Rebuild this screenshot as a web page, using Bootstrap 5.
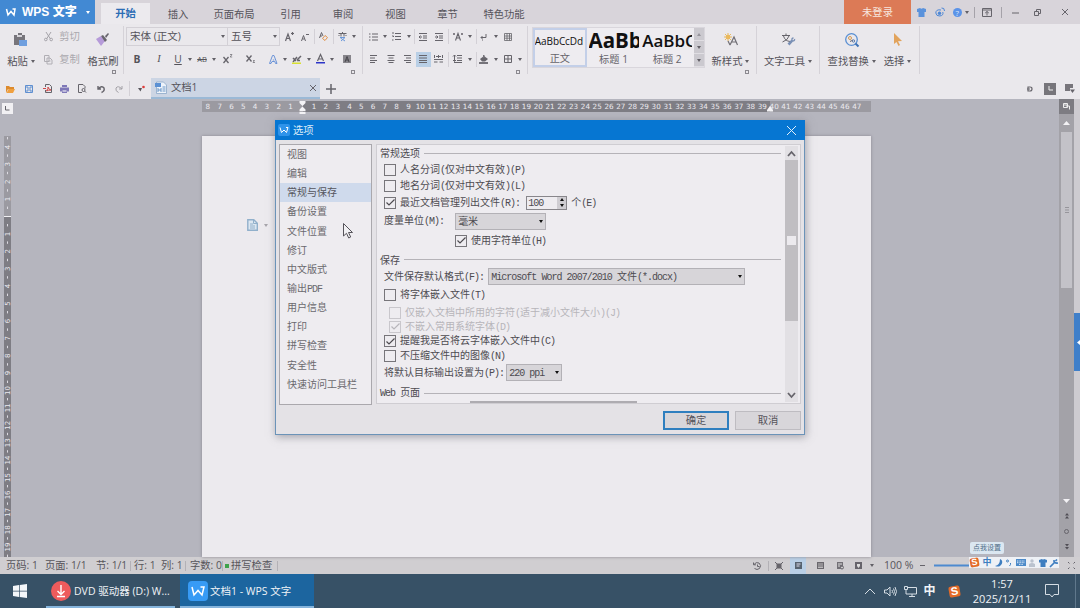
<!DOCTYPE html>
<html lang="zh-CN">
<head>
<meta charset="utf-8">
<title>WPS 文字</title>
<link rel="stylesheet" href="https://cdn.jsdelivr.net/npm/bootstrap@5.3.0/dist/css/bootstrap.min.css">
<style>
html,body{height:100%}
body{width:1080px;height:608px;overflow:hidden;font:10.3px/1.2 "Open Sans","Noto Sans CJK SC",sans-serif;color:#55535a;background:#b5b5be;white-space:nowrap}
svg{display:block;flex:none;overflow:visible}
svg.s{fill:none;stroke:#66646b;stroke-width:1}
.btn{--bs-btn-padding-x:0;--bs-btn-padding-y:0;--bs-btn-font-size:10.3px;--bs-btn-line-height:1.2;--bs-btn-border-radius:0;--bs-btn-color:#55535a;border:0}
.g{display:grid;align-items:center;justify-items:center}
.dn{width:0;height:0;border:2.5px solid transparent;border-top:3px solid #626067;border-bottom:0;display:inline-block;flex:none}
.vl{width:1px;background:#d3d0d6;align-self:center;height:15px}
/* title bar */
.titlebar{height:24px;background:#d8d4da;padding:0}
.titlebar>*{flex:none}
.brand{width:95px;height:24px;background:#4289d3;color:#fff;font:bold 12px/1 "Liberation Sans","Noto Sans CJK SC",sans-serif;padding-left:6px}
.brand .dn{border-top-color:#fff;margin-left:9px}
.brand b{width:55px;margin-left:6px;flex:none}
.tabs{grid-template-columns:49px 56px 56px 57px 48px 57px 47px 66px;margin-left:6px;height:24px}
.tabs a{color:#5c5a61;text-decoration:none;font-size:10.3px;padding-top:4px}
.tabs .on{background:#eceaee;align-self:end;height:21px;width:49px;text-align:center;color:#2c6db5;font-weight:bold;padding-top:4px}
.login{width:67px;height:24px;background:#dc7a56;color:#f7e6df;margin-left:307px}
.wincmd{grid-template-columns:20px 18px 16px 3px 12px 14px 14px 14px 31px 23px}
/* ribbon */
.ribbon{height:54px;background:#eae8ec}
.grp{border-right:1px solid #d5d2d8;height:48px;margin-top:2px}
.big{display:flex;flex-direction:column;align-items:center;height:48px}
.big>svg{margin-top:7px}
.big .lb{position:relative;font-size:10.3px;height:13px;margin-top:auto;margin-bottom:6px;display:flex;align-items:center;gap:3px}
.off{color:#aaa8ae}
.clip{width:124px;grid-template-columns:42px 40px 42px;position:relative}
.mini{display:grid;grid-template-rows:20px 26px;align-items:center;height:48px}
.mini div{display:flex;gap:6px;align-items:center}
.launch{position:absolute;right:7px;bottom:0;width:4px;height:4px;border:1px solid #8b898f}
.font{width:239px;position:relative;padding-left:2px}
.font .r1{grid-template-columns:102px 52px 18px 14px 4px 14px 6px 12px 12px;height:21px}
.font .r2{grid-template-columns:22px 22px 16px 8px 16px 8px 20px 26px 4px 10px 14px 10px 13px 10px 14px 16px;height:24px}
.r1,.r2{justify-content:start}
.combo{width:100%;height:19px;border:1px solid #d3d0d6;display:flex;align-items:center;justify-content:space-between;padding:0 2px 0 3px;font-size:10.5px}
.para{width:165px;position:relative;padding-left:1px}
.para .r1{grid-template-columns:18px 6px 17px 7px 4px 14px 17px 2px 17px 7px 6px 10px 13px 12px 11px;height:21px}
.para .r2{grid-template-columns:20px 14px 18px 14px 17px 2px 17px 7px 6px 10px 13px 12px 11px;height:24px}
.act{background:#b9cfe6;width:15px;height:15px;display:flex;align-items:center;justify-content:center}
.gallery{width:173px;height:41px;margin:3px 0 0 4px;border:1px solid #d9d6dc;background:#eeecf0}
.sty{width:54px;overflow:hidden;text-align:center;color:#111;display:flex;flex-direction:column;align-items:center}
.sty span{height:25px;line-height:25px;font-size:10px;width:50px;overflow:hidden;text-align:left}
.sty small{font-size:10.2px;line-height:12px;color:#66646b}
.sty.on{border:2px solid #c3cfe8;height:39px}
.sty.on span{height:22px;line-height:22px;letter-spacing:-.1px}
.sty .h1s{font:bold 20.5px/25px "Open Sans",sans-serif}
.sty .h2s{font:600 17px/25px "Open Sans",sans-serif}
.gsc{width:10px;background:#cbc9cf;margin-left:auto}
.gsc i{height:13px;border-bottom:1px solid #e0dee3;display:flex;align-items:center;justify-content:center}
/* document tabs */
.quick{height:21px;background:#eae8ec}
.qi{grid-template-columns:20px 18px 18px 17px 18px 19px 17px 4px 20px}
.dtab{width:169px;height:21px;background:#ccd5e4;border-bottom:2px solid #9bb9d6;padding:0 4px 0 4px}
.qr{grid-template-columns:20px 20px 20px}
/* work area */
.work{height:458px;position:relative}
.vside{width:202px}
.corner{width:11px;height:11px;background:#f1f0f3;margin:4px 0 0 2px}
.vruler{width:7px;height:421px;margin:22px 0 0 4px;background:linear-gradient(#9b9aa1 80px,#f1f0f3 80px,#f1f0f3 81px,#7e7d84 81px)}
.vruler text{font:7px "DejaVu Sans",sans-serif;fill:#eceaf0;text-anchor:middle}
.hr1{height:11px;width:669px;margin-top:2px;background:linear-gradient(90deg,#9b9aa1 101px,#7e7d84 101px,#7e7d84 568px,#9b9aa1 568px)}
.hr1 i{font:7.2px/11px "DejaVu Sans",sans-serif;color:#eceaf0;width:11.81px;flex:none;text-align:center}
.hold{position:absolute;top:2px}
.page{margin-top:24px;height:421px;width:669px;background:#eceaee;box-shadow:0 0 3px #88868f;padding:83px 0 0 45px}
.vscroll{width:15px;background:#a3a2a8;margin-left:188px}
.vscroll .top1{height:15px;width:15px;background:#7d7c82}
.thumb{width:11px;height:156px;background:#c3c2c8;margin-top:7px}
.rail{width:6px;background:#cdcbd0}
.rail div{height:58px;margin-top:214px;background:#3f7fc9}
/* status */
.status{height:17px;background:#d0ced1;color:#57555b}
.st{grid-template-columns:39px 51px 34px 4px 27px 24px 5px 32px 4px 4px 43px 6px;justify-items:start;padding-left:6px;font-size:10.3px}
.bar1{height:10px;background:#b3b1b6}
.vw{grid-template-columns:18px 5px 15px 24px 20px 21px 15px 11px;margin-left:auto}
.zoomtxt{font-size:10.5px;width:36px;margin-left:7px}
.zline{margin-right:99px}
/* taskbar */
.task{height:34px;background:#375166;color:#f0f3f6}
.app{height:34px;border-bottom:2px solid #85b4dc;font-size:10.5px}
.tray{grid-template-columns:20px 20px 20px 19px 30px 66px 33px 15px}
.clock{font-size:11px;line-height:15.5px;text-align:center;padding-top:0}
/* options dialog */
.dlg{position:absolute;left:275px;top:120px;width:530px;height:315px;background:#e4e2e6;border:1px solid #6b93b8;box-shadow:1px 2px 8px #66667088;font:10px/12px "Noto Sans CJK SC",sans-serif;color:#4d4b50}
.dlg .l{font:10px/12px "Liberation Mono",monospace;letter-spacing:-.97px}
.dhead{height:20px;margin:-1px -1px 0;background:#0676d2;color:#dcecf9;padding:0 10px 0 3px;font-size:10.3px}
.dhead svg:first-child{margin-right:3px}
.dhead .x{margin-right:-1px}
.side{width:93px;height:261px;border:1px solid #aaa8ad;background:#eeecf0;margin:4px 0 0 3px;border-radius:0;color:#6b696e}
.side .list-group-item{height:19.15px;border:0;background:none;color:inherit;padding:3px 7px;border-radius:0}
.side .list-group-item.on{background:#cfdaec;color:#55555c}
.pane{width:425px;height:260px;border:1px solid #cfcdd2;background:#eeecf0;margin:4px 0 0 4px;overflow:hidden}
.opts{width:408px}
.o{display:flex;align-items:center;flex:none;padding-left:7px}
.h13{height:13px}.h14{height:14px}.h15{height:15px}.h16{height:16px}.h17{height:17px}.h19{height:19px}.h20{height:20px}.h24{height:24px}.h22{height:22px}
.o.hd{padding-left:3px}
.hd hr{flex:1;margin:0 4px 0 4px;border-top:1px solid #b5b3b8;opacity:1}
.cb{width:12px;height:12px;border:1px solid #77757a;margin-right:4px;display:flex;align-items:center;justify-content:center;flex:none}
.dis{color:#b7b5ba;padding-left:12px}
.dis .cb{border-color:#c9c7cc;margin-right:4px}
.sel{height:17px;border:1px solid #b3b1b6;background:#d7d5d9;display:flex;align-items:center;justify-content:space-between;padding:0 2px}
.sel .dn,.spin .dn{border-top-color:#111}
.w91{width:91px;margin-left:11px}.w256{width:257px;margin-left:4px}.w56{width:56px;margin-left:2px}
.spin{width:41px;height:14px;border:1px solid #88868b;margin:0 4px 0 6px;padding-left:1px;display:flex;align-items:center;justify-content:space-between}
.spin div{width:9px;height:12px;background:#cfcdd2;display:flex;flex-direction:column;align-items:center;justify-content:space-around}
.up{transform:rotate(180deg)}
.indent{padding-left:78px}
.peek{width:167px;height:2px;background:#aeacb1;margin:-4px 0 0 93px;flex:none}
.sb{width:13px;background:#e2e0e4;height:256px;margin-top:1px}
.sb .th{width:13px;height:161px;background:#c0bec2;margin-top:4px;padding:76px 0 0 2px}
.sb .th div{width:9px;height:9px;background:#eceaee}
.dbtn{width:66px;height:19px;border:1px solid #bebcc1!important;background:#d8d6da}
.dbtn.ok{border:2px solid #2f7fbf!important}
.cursor{position:absolute;left:343px;top:223px}
/* input method bar */
.tip1{position:absolute;left:970px;top:542px;width:34px;height:12px;background:#dbe7f1;border-radius:2px;font-size:7px;line-height:12px;text-align:center;color:#4f6d86}
.ime{position:absolute;left:969px;top:557px;width:90px;height:11px;background:#eef1f6;padding:0 1px}
.sg{background:#e46b28;color:#fff;font:bold 9px/9px "Liberation Sans",sans-serif;width:9px;height:9px;text-align:center;border-radius:2px;transform:rotate(-10deg)}
</style>
<script src="https://cdn.jsdelivr.net/npm/bootstrap@5.3.0/dist/js/bootstrap.bundle.min.js"></script>
</head>
<body>
<header class="titlebar d-flex align-items-center">
  <div class="brand d-flex align-items-center">
    <svg width="10" height="8" class="s" style="stroke:#fff;stroke-width:1.5"><path d="M.5 1l1.500 6 3-3.500L8 7l1-6H6.500"/></svg>
    <b>WPS 文字</b><span class="dn"></span>
  </div>
  <nav class="tabs g"><a class="on">开始</a><a>插入</a><a>页面布局</a><a>引用</a><a>审阅</a><a>视图</a><a>章节</a><a>特色功能</a></nav>
  <div class="login d-flex align-items-center justify-content-center">未登录</div>
  <div class="wincmd g">
    <svg width="9" height="9" fill="#5a92dc"><path d="M0 1l3-1q1.500 1.500 3 0l3 1v3H7.500v5h-6V4H0z"/></svg>
    <svg width="10" height="10" class="s" style="stroke:#4b86d6"><path d="M6 3Q1 2 .8 6q.5 3.300 4 3 4-.5 3-4M6.500 1q3-.5 3 3"/><circle cx="4.500" cy="6.300" r="1.300" fill="#4b86d6"/></svg>
    <svg width="9" height="9"><circle cx="4.500" cy="4.500" r="4.500" fill="#5b93e8"/><text x="2.500" y="7.500" font-size="8" fill="#dfe9fa">?</text></svg>
    <span class="dn"></span><span class="vl" style="background:#a5a2a9;height:11px"></span>
    <svg width="10" height="9" class="s"><path d="M.5.5h9v8h-9zM.5 2h9M5 7.500v-4M3.200 5L5 3.500 6.800 5"/></svg>
    <span class="vl" style="background:#a5a2a9;height:11px"></span>
    <svg width="7" height="3" class="s"><path d="M0 2h7"/></svg>
    <svg width="7" height="7" class="s"><path d="M.5 2.500h4v4h-4zM2.500 2V.5h4v4H5"/></svg>
    <svg width="6" height="6" class="s"><path d="M0 0l6 6M6 0L0 6"/></svg>
  </div>
</header>

<section class="ribbon d-flex">
  <div class="grp g clip align-items-start">
    <div class="big"><svg width="14" height="14"><path d="M0 2h4V0h4v2h3v10H0z" fill="#77757b"/><path d="M3 2h5v2H3z" fill="#d6d4d9"/><path d="M5 7h8v6H5z" fill="#6f9fdf"/></svg><span class="lb">粘贴<i class="dn"></i></span></div>
    <div class="mini off"><div><svg width="9" height="9" class="s" style="stroke:#a5a3a9"><path d="M2 0l4.500 7M7 0L2.500 7"/><circle cx="1.800" cy="7.500" r="1.300"/><circle cx="7.200" cy="7.500" r="1.300"/></svg><span>剪切</span></div><div><svg width="9" height="9" class="s" style="stroke:#b0aeb4"><path d="M.5.5H5v6H.5zM3 3h3l2 2v4H3zM4.500 6h2"/></svg><span>复制</span></div></div>
    <div class="big"><svg width="13" height="13"><path d="M0 6l5-3 4 5-4 5z" fill="#b69bd9"/><path d="M5 3l2-1 4 5-2 2zM9 3l3-3 1 1-3 4z" fill="#68656d"/></svg><span class="lb">格式刷</span></div>
    <i class="launch"></i>
  </div>

  <div class="grp font">
    <div class="g r1">
      <div class="combo">宋体 (正文)<i class="dn"></i></div><div class="combo border-start-0">五号<i class="dn"></i></div>
      <svg width="9" height="9" class="s"><path d="M.5 9L3 2l2.500 7M1.500 6.500h3M6 1.500h3M7.500 0v3" stroke-width="1.200"/></svg>
      <svg width="8" height="8" class="s"><path d="M.5 8l2-5.500L4.500 8M1.500 6h2M5 1.500h3"/></svg>
      <i class="vl"></i>
      <svg width="9" height="9" class="s"><path d="M.5 6L2.500.5 4 4M1 4h2"/><path d="M3.500 6.500l2.500-3 2.500 2-2.500 3z" style="stroke:#e0924a"/></svg>
      <i class="vl"></i>
      <svg width="9" height="9" class="s"><path d="M.5 1.500h8M4.500 0v1.500M3 2v2.500M6 2v2.500M1 3v1M8 3v1"/><path d="M2 5.500h5L3 9M2.500 6L7 9" style="stroke:#6c99da"/></svg><i class="dn"></i>
    </div>
    <div class="g r2">
      <b>B</b><i style="font-family:'Liberation Serif'">I</i><u>U</u><i class="dn"></i><s style="font-size:7.500px">AB</s><i class="dn"></i>
      <svg width="10" height="10" class="s"><path d="M.5 3l5 6M5.500 3l-5 6" stroke-width="1.300"/><path d="M7 .5h2L7.200 3h2" stroke-width=".7"/></svg>
      <svg width="10" height="8" class="s"><path d="M.5.5l5 6M5.500.5l-5 6" stroke-width="1.300"/><path d="M7 5.500h1.500L7 7.500h2" stroke-width=".7"/></svg>
      <i></i>
      <svg width="9" height="9" class="s" style="stroke:#6c94d8"><path d="M.5 8.500L3.500.5h1.500l3 8H6.500L5.800 6.500H3L2 8.500zM3.800 5h1.500"/></svg><i class="dn"></i>
      <svg width="10" height="9"><path d="M1 7l4-5M5 5l4-4M1 3l3 3M5 5.500h3" stroke="#66646b" stroke-width="1.500"/><path d="M0 7.500h9V9H0z" fill="#d8e030"/></svg><i class="dn"></i>
      <svg width="9" height="10"><path d="M1.500 7L4.500.5 7.500 7M2.500 5h4" fill="none" stroke="#66646b" stroke-width="1.200"/><path d="M0 8h9v1.500H0z" fill="#2d35c9"/></svg><i class="dn"></i>
      <svg width="8" height="8"><path d="M0 0h8v8H0z" fill="#87858b"/><path d="M2 7l2-5.500L6 7M3 5h2.500" fill="none" stroke="#48464c"/></svg>
    </div>
    <i class="launch"></i>
  </div>

  <div class="grp para">
    <div class="g r1">
      <svg width="9" height="8" class="s"><path d="M0 1h1.500M3 1h6M0 4h1.500M3 4h6M0 7h1.500M3 7h6"/></svg><i class="dn"></i>
      <svg width="9" height="9" class="s"><path d="M1 0v2M0 4h1.500v1M0 8h1.500M3 1.500h6M3 4.500h6M3 7.500h6"/></svg><i class="dn"></i><i class="vl"></i>
      <svg width="8" height="8" class="s"><path d="M0 .5h8M4 3h4M4 5h4M0 7.500h8M3 4H0M1.500 2.500L0 4l1.500 1.500"/></svg>
      <svg width="8" height="8" class="s"><path d="M0 .5h8M4 3h4M4 5h4M0 7.500h8M0 4h3M1.500 2.500L3 4 1.500 5.500"/></svg><i class="vl"></i>
      <svg width="10" height="9" class="s"><path d="M2.500 8.500l2.500-7 2.500 7M3.500 6h3M0 2h2M8 2h2M1 1v2M9 1v2" stroke-width="1.100"/></svg><i class="dn"></i><i class="vl"></i>
      <svg width="8" height="8" class="s"><path d="M6 1v3.500H1M2.500 3L1 4.500 2.500 6M2 7h1"/></svg><i class="dn"></i>
      <svg width="8" height="8" class="s"><path d="M.5.5h7v7h-7zM.5 3h7M.5 5.200h7M3 .5v7M5.500.5v7" stroke-width=".8"/></svg><i></i>
    </div>
    <div class="g r2">
      <svg width="8" height="8" class="s"><path d="M0 .5h7M0 3h5M0 5.500h7M0 7.500h5"/></svg>
      <svg width="8" height="8" class="s"><path d="M.5.5h7M1.500 3h5M.5 5.500h7M1.500 7.500h5"/></svg>
      <svg width="8" height="8" class="s"><path d="M1 .5h7M3 3h5M1 5.500h7M3 7.500h5"/></svg>
      <span class="act"><svg width="8" height="8" class="s"><path d="M0 .5h8M0 3h8M0 5.500h8M0 7.500h8"/></svg></span>
      <svg width="9" height="8" class="s"><path d="M.5 0v3M8.500 0v3M2 1.500h5M0 4.500h9M0 7h3.500M5.500 7H9M4.500 0v3"/></svg><i class="vl"></i>
      <svg width="9" height="8" class="s"><path d="M4 .5h5M4 3h5M4 5.500h5M1 7.500h8M1.500 0v6M0 1.500L1.500 0 3 1.500M0 5l1.500 1.500L3 5"/></svg><i class="dn"></i><i class="vl"></i>
      <svg width="10" height="9"><path d="M1 4l4-3 4 3-3 2.500H3z" fill="#66646b"/><path d="M4 3V0h1.500v3zM0 7h9v2H0z" fill="#75737a"/></svg><i class="dn"></i>
      <svg width="8" height="8" class="s"><path d="M.5.5h7v7h-7zM4 .5v7M.5 4h7"/></svg><i class="dn"></i>
    </div>
    <i class="launch"></i>
  </div>

  <div class="gallery d-flex">
    <div class="sty on"><span>AaBbCcDd</span><small>正文</small></div>
    <div class="sty"><span class="h1s">AaBb</span><small>标题 1</small></div>
    <div class="sty"><span class="h2s">AaBbC</span><small>标题 2</small></div>
    <div class="gsc"><i><b class="dn up opacity-50"></b></i><i><b class="dn"></b></i><i><b class="dn"></b></i></div>
  </div>

  <div class="grp position-relative" style="width:52px">
    <div class="big"><svg width="14" height="13"><circle cx="4" cy="4" r="2.300" fill="#eab95e"/><path d="M4 0v8M0 4h8M1 1l6 6M7 1L1 7" stroke="#eab95e"/><path d="M6 12l4-8 3.500 8M7.500 9h5M4 8l2 4" stroke="#716f75" fill="none" stroke-width="1.200"/></svg><span class="lb">新样式<i class="dn"></i></span></div><i class="launch"></i>
  </div>
  <div class="grp" style="width:63px"><div class="big"><svg width="13" height="13" class="s"><path d="M0 2.500h8M4 .5v2M1.500 3Q3 8 8 8.500M7 3Q6 7 .5 9"/><path d="M6 11l4-4q-.5-2 1.500-2M12.500 6q.5 2-2 2l-3.500 4" style="stroke:#7a90b5;stroke-width:1.300"/></svg><span class="lb">文字工具<i class="dn"></i></span></div></div>
  <div class="grp d-flex justify-content-center" style="width:100px;gap:8px">
    <div class="big"><svg width="14" height="14" class="s"><circle cx="6.500" cy="6.500" r="5.800" style="stroke:#5a8fd2;stroke-width:1.300"/><path d="M10.500 10.500l3 3" style="stroke:#3f72b5;stroke-width:2"/><circle cx="5" cy="5" r="1.500" style="stroke:#d59a52"/><path d="M5 8.500l3-1.500"/><circle cx="8.500" cy="8" r="1.200" style="stroke:#5d7ba8"/></svg><span class="lb">查找替换<i class="dn"></i></span></div>
    <div class="big"><svg width="9" height="14"><path d="M1 0v11l2.500-2 2 4 1.500-1-2-3.800L9 8z" fill="#e2a35c"/></svg><span class="lb">选择<i class="dn"></i></span></div>
  </div>
</section>

<section class="quick d-flex align-items-center">
  <div class="g qi">
    <svg width="9" height="8"><path d="M0 1h3l1 1h4v2H2L0 8z" fill="#dd8a2c"/><path d="M2.500 4H9L7 8H.5z" fill="#f0a03f"/></svg>
    <svg width="8" height="8" class="s" style="stroke:#5f8fd0"><path d="M.5.5h7v7h-7zM2 .5V3h4V.5M2 7.500V5h4v2.500"/></svg>
    <svg width="9" height="9" class="s"><path d="M2.500 3V.5h4l2 2v6h-6V6"/><path d="M3.500 7q2-3 1.500-4 .5 2.500 3 3-3 0-4.500 1M0 4.500h3" style="stroke:#cf4848"/></svg>
    <svg width="9" height="8"><path d="M2 0h5v2H2zM0 2.500h9v4H0zM2 5h5v3H2z" fill="#7f78b8"/><path d="M2.500 5.500h4v1h-4z" fill="#fff"/></svg>
    <svg width="8" height="9" class="s"><path d="M4 8.500H.5v-8H5l2 2v2"/><circle cx="5.500" cy="6" r="1.500"/><path d="M6.500 7L8 8.500"/></svg>
    <svg width="8" height="8" class="s"><path d="M1 1v3h3M1 4Q5 0 7 3 8 6 4.500 7.500" stroke-width="1.400"/></svg>
    <svg width="8" height="8" class="s" style="stroke:#a3a1a7"><path d="M7 1v3H4M7 4Q3 0 1 3 0 6 3.500 7.500"/></svg>
    <i class="vl"></i>
    <svg width="7" height="6"><path d="M0 2h4L2.500 5.500z" fill="#57555b"/><circle cx="5.500" cy="1" r="1.300" fill="#dd3d3a"/></svg>
  </div>
  <div class="dtab d-flex align-items-center">
    <svg width="12" height="13"><path d="M1.500 1h7l3 3v8.500h-10z" fill="#eef3fa" stroke="#8ba7c8" stroke-width=".8"/><path d="M0 2h6v4H0z" fill="#5b90d3"/><path d="M3 7v4M3 9h3M6 7v4M7.500 6h3M7.500 8h3M7.500 10h3" stroke="#6c97c7"/></svg>
    <span class="ms-1">文档1</span>
    <svg width="6" height="6" class="s ms-auto"><path d="M0 0l6 6M6 0L0 6"/></svg>
  </div>
  <svg width="10" height="10" class="s" style="margin-left:6px"><path d="M5 0v10M0 5h10" stroke-width="1.500"/></svg>
  <div class="g qr ms-auto">
    <svg width="6" height="6" class="s"><path d="M1 1h2q2 0 2 2t-2 2H1zM0 3h3" stroke-width="1.200"/></svg>
    <svg width="12" height="12"><path d="M0 0h12v12H0z" fill="#77757b"/><path d="M5 3v4h4" stroke="#eee" fill="none"/></svg>
    <svg width="10" height="9"><path d="M0 0h8v4H5v3H0z" fill="#77757b"/><path d="M5 5.500h5L7.500 9z" fill="#66646b"/></svg>
  </div>
</section>

<main class="work d-flex">
  <div class="vside d-flex flex-column">
    <div class="corner"><svg width="11" height="11" class="s"><path d="M3.500 3v4h4"/></svg></div>
    <svg class="vruler overflow-hidden" id="vruler"></svg>
  </div>
  <div>
    <div class="hr1 d-flex" id="hruler"></div>
    <svg class="hold" style="left:299px" width="7" height="13" fill="#f4f3f6"><path d="M.5 0h6v2l-3 3-3-3zM3.500 5.500l3 3V10h-6V8.500zM.5 10.800h6V13h-6z"/></svg>
    <svg class="hold" style="left:767px" width="7" height="12" fill="#f4f3f6"><path d="M3 5l3 4v1.500H0V9z"/></svg>
    <div class="page d-flex align-items-start">
      <svg width="11" height="12"><path d="M.8.8h6l3.500 3.500v7H.8z" fill="#dce7f1" stroke="#91b0cb" stroke-width="1.400"/><path d="M3 5h3M3 7h5M3 9h5M6.500 1v3.500H10" stroke="#91b0cb" fill="none"/></svg>
      <i class="dn opacity-50" style="margin:5px 0 0 6px"></i>
    </div>
  </div>
  <div class="vscroll d-flex flex-column align-items-center">
    <div class="top1 d-flex align-items-center justify-content-center"><svg width="7" height="7" class="s" style="stroke:#eee"><path d="M.5.5h4v4h-4zM3 3h3.500v3.500M1 2h3"/></svg></div>
    <svg width="7" height="4" fill="#f3f2f5" style="margin-top:7px"><path d="M0 4l3.500-4L7 4z"/></svg>
    <div class="thumb d-flex align-items-center justify-content-center"><svg width="4" height="6" class="s" style="stroke:#96959b"><path d="M0 .5h4M0 3h4M0 5.500h4"/></svg></div>
    <svg width="7" height="4" fill="#f3f2f5" style="margin-top:211px"><path d="M0 0h7L3.500 4z"/></svg>
    <svg width="4" height="6" fill="#504e55" style="margin-top:10px"><path d="M0 2.500L2 0l2 2.500zM0 5.500L2 3l2 2.500z"/></svg>
    <svg width="5" height="5" class="s" style="margin-top:10px"><circle cx="2.500" cy="2.500" r="2"/></svg>
    <svg width="4" height="6" fill="#504e55" style="margin-top:10px"><path d="M0 0h4L2 2.500zM0 3h4L2 5.500z"/></svg>
  </div>
  <div class="rail"><div class="d-flex align-items-center justify-content-end"><svg width="4" height="5" fill="#fff"><path d="M4 0v5L1 2.500z"/></svg></div></div>
</main>

<footer class="status d-flex align-items-center">
  <div class="g st"><span>页码: 1</span><span>页面: 1/1</span><span>节: 1/1</span><i class="vl bar1"></i><span>行: 1</span><span>列: 1</span><i class="vl bar1"></i><span>字数: 0</span><i class="vl bar1"></i><i style="width:4px;height:4px;background:#3fa24c;margin-left:-1px"></i><span style="margin-left:1px">拼写检查</span><i class="vl ms-1 bar1"></i></div>
  <div class="g vw">
    <svg width="8" height="8" class="s"><path d="M1 2.500Q3-.5 6 1q3 2.500.5 5.500Q4 8.500 1.500 6.500M.5.500v2.300H3M4.500 2.500v2h2"/></svg>
    <i class="vl bar1"></i>
    <svg width="8" height="8" class="s"><path d="M0 0l2 2M8 0L6 2M0 8l2-2M8 8L6 6"/><path d="M2 2h4v4H2z" fill="#66646b"/></svg>
    <span class="act" style="height:17px;width:16px"><svg width="7" height="7"><path d="M0 0h7v7H0z" fill="#56626f"/><path d="M1.500 2h4M1.500 4h3" stroke="#dde"/></svg></span>
    <svg width="7" height="7"><path d="M0 0h7v7H0z" fill="#6a686e"/><path d="M1 2h5M1 4h5M1 5.500h5" stroke="#ddd" stroke-width=".7"/></svg>
    <svg width="7" height="8"><path d="M0 0h6v7H0z" fill="#727076"/><path d="M1 2h4M1 4h2" stroke="#ddd"/><circle cx="5" cy="5.500" r="1.500" fill="#ccc" stroke="#66646b"/></svg>
    <svg width="7" height="7"><path d="M0 0h7v7H0z" fill="#66646b"/><path d="M2 2h3v2L3.500 6 2 4z" fill="#ddd"/></svg>
    <i class="dn"></i>
  </div>
  <span class="zoomtxt">100 %</span>
  <svg width="49" height="3" class="s zline"><path d="M0 1.500h5"/><path d="M14 1.500h37" style="stroke:#4d8ad0;stroke-width:2"/></svg>
  <svg width="7" height="7" class="s" style="margin-right:5px"><path d="M0 0l2 2M7 0L5 2M0 7l2-2M7 7L5 5" stroke-dasharray="1.500 .7"/></svg>
</footer>

<footer class="task d-flex align-items-center">
  <svg width="14" height="14" fill="#f3f6f9" style="margin-left:13px"><path d="M0 2l6-1v5.700H0zM6.700.9L14 0v6.700H6.700zM0 7.400h6v5.700l-6-1zM6.700 7.400H14V14l-7.300-1z"/></svg>
  <div class="app d-flex align-items-center" style="width:129px;margin-left:19px;padding:2px 0 0 6px"><svg width="20" height="20" style="margin:0 3px 0 -1px"><circle cx="10" cy="10" r="10" fill="#ee5b5c"/><path d="M10 4v9M6.500 10l3.500 3.500 3.500-3.500M6 15.500h8" fill="none" stroke="#fff" stroke-width="1.400"/></svg><span>DVD 驱动器 (D:) W...</span></div>
  <div class="app d-flex align-items-center" style="width:134px;margin-left:5px;padding:2px 0 0 8px;background:#1c659f"><svg width="20" height="20"><rect width="20" height="20" rx="4" fill="#379bf5"/><path d="M4 6l2 8 4-4.500 4 4.500 2-8h-3.500" fill="none" stroke="#fff" stroke-width="1.500"/></svg><span style="margin-left:2px">文档1 - WPS 文字</span></div>
  <div class="g tray ms-auto me-n1" style="width:220px">
    <svg width="10" height="5" class="s" style="stroke:#d5dde4"><path d="M0 5l5-5 5 5"/></svg>
    <svg width="13" height="11" class="s" style="stroke:#d5dde4"><path d="M.5 4v3H3l3 3V1L3 4zM8 4q1 1.500 0 3M9.500 2.500q2 3 0 6M11 1q3 4.500 0 9"/></svg>
    <svg width="13" height="11" class="s" style="stroke:#d5dde4"><path d="M4 1.500h8.500v6.500H4M8 8v2M5 10.500h6M.5.500h3v3h-3zM2 4v4h2"/></svg>
    <b style="font-size:12px">中</b>
    <span class="sg" style="width:11px;height:11px;font-size:11px;line-height:11px">S</span>
    <div class="clock">1:57<br>2025/12/11</div>
    <svg width="14" height="14" class="s" style="stroke:#d5dde4"><path d="M.5.500h13v10H9L7 13l-2-2.500H.5z"/></svg>
    <i class="vl" style="height:34px;background:#60788c"></i>
  </div>
</footer>

<div class="dlg" id="dlg" role="dialog">
  <div class="dhead d-flex align-items-center"><svg width="12" height="12"><rect width="12" height="12" rx="2" fill="#2f93ea"/><path d="M2 3.500l1.500 5L6 6l2.500 2.500L10 3.500H8" fill="none" stroke="#fff"/></svg>选项
    <svg width="9" height="9" class="s x ms-auto" style="stroke:#e0effb"><path d="M0 0l9 9M9 0L0 9"/></svg></div>
  <div class="d-flex">
    <div class="list-group side">
      <div class="list-group-item">视图</div><div class="list-group-item">编辑</div><div class="list-group-item on">常规与保存</div><div class="list-group-item">备份设置</div><div class="list-group-item">文件位置</div><div class="list-group-item">修订</div><div class="list-group-item">中文版式</div><div class="list-group-item">输出PDF</div><div class="list-group-item">用户信息</div><div class="list-group-item">打印</div><div class="list-group-item">拼写检查</div><div class="list-group-item">安全性</div><div class="list-group-item">快速访问工具栏</div>
    </div>
    <div class="pane d-flex">
      <div class="opts d-flex flex-column">
        <div class="o hd h16">常规选项<hr></div>
        <div class="o h17"><i class="cb"></i>人名分词(仅对中文有效)(P)</div>
        <div class="o h16"><i class="cb"></i>地名分词(仅对中文有效)(L)</div>
        <div class="o h17"><i class="cb ck"></i>最近文档管理列出文件(R):<span class="spin">100<div><i class="dn up"></i><i class="dn"></i></div></span>个(E)</div>
        <div class="o h20">度量单位(M):<span class="sel w91">毫米<i class="dn"></i></span></div>
        <div class="o h19 indent"><i class="cb ck"></i>使用字符单位(H)</div>
        <div class="o hd h19">保存<hr></div>
        <div class="o h15">文件保存默认格式(F):<span class="sel w256">Microsoft Word 2007/2010 文件(*.docx)<i class="dn"></i></span></div>
        <div class="o h22"><i class="cb"></i>将字体嵌入文件(T)</div>
        <div class="o h13 dis"><i class="cb"></i>仅嵌入文档中所用的字符(适于减小文件大小)(J)</div>
        <div class="o h15 dis"><i class="cb ck"></i>不嵌入常用系统字体(D)</div>
        <div class="o h14"><i class="cb ck"></i>提醒我是否将云字体嵌入文件中(C)</div>
        <div class="o h16"><i class="cb"></i>不压缩文件中的图像(N)</div>
        <div class="o h17">将默认目标输出设置为(P):<span class="sel w56">220 ppi<i class="dn"></i></span></div>
        <div class="o hd h24">Web 页面<hr></div>
        <div class="peek"></div>
      </div>
      <div class="sb d-flex flex-column align-items-center">
        <svg width="7" height="5" class="s" style="margin-top:5px"><path d="M0 5l3.500-4L7 5" stroke-width="1.800"/></svg>
        <div class="th"><div></div></div>
        <svg width="7" height="5" class="s mt-auto" style="margin-bottom:4px"><path d="M0 0l3.500 4L7 0" stroke-width="1.800"/></svg>
      </div>
    </div>
  </div>
  <div class="d-flex justify-content-end" style="gap:6px;padding:6px 3px 0 0">
    <button class="btn dbtn ok">确定</button><button class="btn dbtn">取消</button>
  </div>
</div>
<svg class="cursor" width="10" height="16"><path d="M.5.500v12.500l3-2.700 2.200 4.700 2-1-2.200-4.500h4z" fill="#f1f0f3" stroke="#55535a"/></svg>

<div class="tip1">点我设置</div>
<div class="ime d-flex align-items-center justify-content-between">
  <span class="sg">S</span><b style="color:#3e7ec0;font-size:9px">中</b>
  <svg width="8" height="8" fill="#3e7ec0"><path d="M5 0q3 1 2 4.500Q5 9 0 7q5-1 5-7z"/></svg>
  <svg width="6" height="7" class="s" style="stroke:#3e7ec0"><circle cx="1.500" cy="2" r="1"/><path d="M4.500 4v1.500L3.500 7"/></svg>
  <svg width="10" height="7"><rect width="10" height="7" fill="#4c8ac9"/><path d="M1 2h8M1 3.700h8M3 5.400h4" stroke="#fff" stroke-dasharray="1 .6" stroke-width=".8"/></svg>
  <svg width="6" height="8" fill="#bac2ce"><circle cx="3" cy="2" r="1.700"/><path d="M0 8V5q3-2 6 0v3z"/></svg>
  <svg width="8" height="8" fill="#3e7ec0"><path d="M0 1l3-1q1 1 2 0l3 1v2.500H6.500V8h-5V3.500H0z"/></svg>
  <svg width="8" height="8" class="s" style="stroke:#3e7ec0;stroke-width:1.700"><path d="M0 8l4.500-4.500M4 1q-.5 3.500 4 3M5.500 2L7 .5"/></svg>
</div>

<script>
// ruler numbers
const hruler = document.getElementById('hruler'), vruler = document.getElementById('vruler');
for (let n = -8; n <= 47; n++) hruler.insertAdjacentHTML('beforeend', `<i>${n ? Math.abs(n) : ''}</i>`);
let marks = '';
for (let n = -9; n <= 39; n++) {
  if (!n) continue;
  const y = 80.5 + n * 8.7;
  marks += n % 2 ? `<path d="M3.500 ${y - 1.200}v2.400" stroke="#dddbe2"/>` : `<text transform="translate(6.200 ${y}) rotate(-90)">${Math.abs(n / 2)}</text>`;
}
vruler.innerHTML = marks;
// tick marks inside the checked boxes
document.querySelectorAll('.ck').forEach(e => e.innerHTML = '<svg width="9" height="7" class="s"><path d="M.5 3.500l2.500 2.500L8.500.5" style="stroke:currentColor;stroke-width:1.200"/></svg>');
// half-width runs in the dialog use a monospaced face
const w = document.createTreeWalker(document.getElementById('dlg'), NodeFilter.SHOW_TEXT), list = [];
while (w.nextNode()) if (w.currentNode.nodeValue.trim()) list.push(w.currentNode);
list.forEach(t => {
  const s = document.createElement('span');
  s.style.whiteSpace = 'pre';
  s.innerHTML = t.nodeValue.trim().replace(/[\x20-\x7e]+/g, m => `<span class="l">${m}</span>`);
  t.replaceWith(s);
});
</script>
</body>
</html>
